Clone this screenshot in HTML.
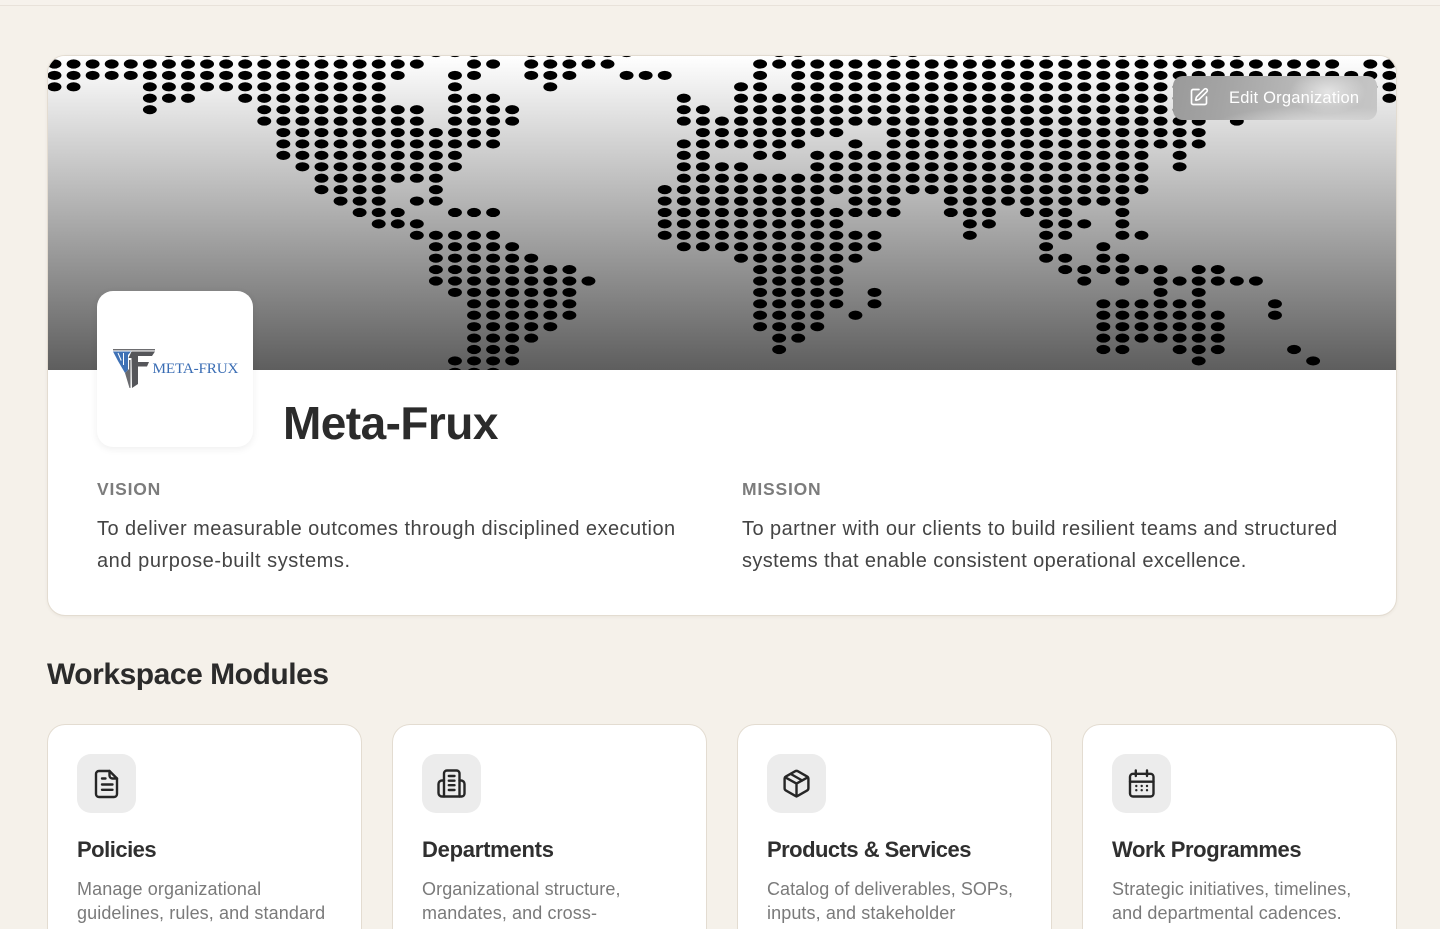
<!DOCTYPE html>
<html lang="en">
<head>
<meta charset="utf-8">
<title>Meta-Frux</title>
<style>
*{box-sizing:border-box;margin:0;padding:0}
html,body{width:1440px;height:929px;overflow:hidden;background:#f5f1ea;font-family:"Liberation Sans",sans-serif;color:#2b2b2b}
#wrap{position:relative;width:1440px;height:929px;overflow:hidden}
.abs{position:absolute;white-space:nowrap}
#top{position:absolute;left:0;top:0;width:1440px;height:6px;background:#f6f2ec;border-bottom:1px solid #e8e2da}
#card{position:absolute;left:47px;top:55px;width:1350px;height:561px;background:#fff;border:1px solid #e3dcd1;border-radius:18px;overflow:hidden;box-shadow:0 1px 3px rgba(60,50,30,.06)}
#banner{position:absolute;left:0;top:0;width:1348px;height:314px;background:linear-gradient(180deg,#fff 0%,#5e5e5e 100%);overflow:hidden}
#banner svg{position:absolute;left:0;top:0}
#btn{position:absolute;left:1125px;top:20px;width:204px;height:44px;border-radius:10px;background:radial-gradient(ellipse 38px 22px at 155px 16px,rgba(232,232,232,.9),rgba(232,232,232,0)),radial-gradient(ellipse 110px 20px at 150px 50px,rgba(224,224,224,.95),rgba(224,224,224,0)),linear-gradient(100deg,#9a9a9a 0%,#a4a4a4 25%,#b8b8b8 60%,#c6c6c6 100%)}
#btn svg{position:absolute;left:16px;top:11px}
#btn span{position:absolute;left:56px;top:12px;font-size:16.5px;line-height:20px;color:#fff;white-space:nowrap;letter-spacing:.22px}
#logo{position:absolute;left:97px;top:291px;width:156px;height:156px;background:#fff;border-radius:16px;box-shadow:0 2px 8px rgba(0,0,0,.07)}
.lab{font-size:17.5px;font-weight:700;color:#7c7c7c;letter-spacing:.8px;line-height:20px}
.txt{font-size:20px;line-height:32px;color:#444}
.c{position:absolute;top:724px;width:315px;height:205px;background:#fff;border:1px solid #e3dcd1;border-bottom:none;border-radius:18px 18px 0 0}
.ib{position:absolute;left:29px;top:29px;width:59px;height:59px;background:#ececec;border-radius:14px}
.ib svg{position:absolute;left:0;top:0;fill:none;stroke:#262626;stroke-width:2.4;stroke-linecap:round;stroke-linejoin:round}
.h{position:absolute;left:29px;top:111px;font-size:22px;font-weight:700;line-height:28px;color:#2f2f2f;white-space:nowrap}
.d{position:absolute;left:29px;top:152px;font-size:18px;line-height:24px;color:#7a7a7a;letter-spacing:.1px;white-space:nowrap}
</style>
</head>
<body>
<div id="wrap">
<div id="top"></div>
<div id="card">
  <div id="banner">
    <svg width="1348" height="314" viewBox="48 56 1348 314">
      <g transform="translate(54.5 64) scale(19.07 12.55)">
        <path fill="none" stroke="#000" stroke-width=".73" stroke-linecap="round" stroke-dasharray="0 1" d="
M6 -.91h16.5M25 -.91h5.5M38 -.91h1.5M44 -.91h1.5M47 -.91h15.5
M0 0h19.5M22 0h1.5M25 0h4.5M37 0h30.5M69 0h1.5
M0 .91h18.5M21 .91h1.5M25 .91h2.5M30 .91h2.5M37 .91h.5M39 .91h31.5
M0 1.82h1.5M5 1.82h12.5M21 1.82h.5M26 1.82h.5M36 1.82h1.5M39 1.82h27.5M69 1.82h1.5
M5 2.73h2.5M10 2.73h7.5M21 2.73h2.5M33 2.73h.5M36 2.73h30.5M70 2.73h.5
M5 3.64h.5M11 3.64h8.5M21 3.64h3.5M33 3.64h1.5M36 3.64h24.5
M11 4.55h8.5M21 4.55h3.5M33 4.55h27.5M62 4.55h.5
M12 5.46h11.5M34 5.46h7.5M44 5.46h16.5
M12 6.37h11.5M33 6.37h6.5M42 6.37h.5M44 6.37h16.5
M12 7.28h9.5M33 7.28h1.5M37 7.28h1.5M40 7.28h17.5M59 7.28h.5
M13 8.19h8.5M33 8.19h3.5M40 8.19h17.5M59 8.19h.5
M14 9.1h6.5M33 9.1h24.5
M14 10.01h3.5M20 10.01h.5M32 10.01h25.5
M15 10.92h2.5M19 10.92h1.5M32 10.92h8.5M42 10.92h2.5M47 10.92h9.5
M16 11.83h2.5M21 11.83h2.5M32 11.83h12.5M47 11.83h2.5M51 11.83h2.5M56 11.83h.5
M17 12.74h2.5M32 12.74h9.5M48 12.74h1.5M52 12.74h2.5M56 12.74h.5
M19 13.65h4.5M32 13.65h11.5M48 13.65h.5M52 13.65h1.5M56 13.65h1.5
M20 14.56h4.5M33 14.56h10.5M52 14.56h.5M55 14.56h.5
M20 15.47h5.5M36 15.47h6.5M52 15.47h1.5M55 15.47h1.5
M20 16.38h7.5M37 16.38h4.5M53 16.38h5.5M60 16.38h1.5
M20 17.29h8.5M37 17.29h4.5M54 17.29h.5M56 17.29h.5M58 17.29h5.5
M21 18.2h6.5M37 18.2h4.5M43 18.2h.5M58 18.2h.5M60 18.2h.5
M22 19.11h5.5M37 19.11h4.5M43 19.11h.5M55 19.11h5.5M64 19.11h.5
M22 20.02h5.5M37 20.02h3.5M42 20.02h.5M55 20.02h6.5M64 20.02h.5
M22 20.93h4.5M37 20.93h3.5M55 20.93h6.5
M22 21.84h3.5M38 21.84h1.5M55 21.84h6.5
M22 22.75h2.5M38 22.75h.5M55 22.75h1.5M59 22.75h2.5M65 22.75h.5
M21 23.66h3.5M60 23.66h.5M66 23.66h.5
M21 24.57h2.5"/>
      </g>
    </svg>
    <div id="btn">
      <svg width="20" height="20" viewBox="0 0 24 24" fill="none" stroke="#fff" stroke-width="2" stroke-linecap="round" stroke-linejoin="round">
        <path d="M12 3H5a2 2 0 0 0-2 2v14a2 2 0 0 0 2 2h14a2 2 0 0 0 2-2v-7"/>
        <path d="M18.375 2.625a1 1 0 0 1 3 3l-9.013 9.014a2 2 0 0 1-.853.505l-2.873.84a.5.5 0 0 1-.62-.62l.84-2.873a2 2 0 0 1 .506-.852z"/>
      </svg>
      <span>Edit Organization</span>
    </div>
  </div>
</div>

<div id="logo">
  <svg width="156" height="156" viewBox="97 291 156 156" style="position:absolute;left:0;top:0">
    <rect x="113" y="349" width="42" height="1.4" fill="#6d6d70"/>
    <polygon points="113,351.500 131,351.500 128,355 128,370 125,373 118,361" fill="#3f71b5"/>
    <path d="M118 353l3.200 7.500M123.500 353v12" stroke="#fff" stroke-width="1" fill="none"/>
    <polygon points="131.500,351.500 155,351.500 152,356 138,356 138,362 149,362 147,366.500 138,366.500 138,384 132,388 131.500,358 128.500,358" fill="#55565a"/>
    <polygon points="125,373 129,369 129,360 130.500,360 130.500,388 129.500,388" fill="#6a6b6f"/>
    <text x="152.5" y="373" font-family="'Liberation Serif',serif" font-size="15.2" fill="#3a6db4" textLength="86">META-FRUX</text>
  </svg>
</div>

<div class="abs" style="left:283px;top:397px;font-size:46px;line-height:52px;font-weight:700;color:#2b2b2b;letter-spacing:-.55px">Meta-Frux</div>

<div class="abs lab" style="left:97px;top:479px">VISION</div>
<div class="abs txt" style="left:97px;top:513px"><span style="letter-spacing:.453px">To deliver measurable outcomes through disciplined execution</span><br><span style="letter-spacing:.56px">and purpose-built systems.</span></div>

<div class="abs lab" style="left:742px;top:479px">MISSION</div>
<div class="abs txt" style="left:742px;top:513px"><span style="letter-spacing:.444px">To partner with our clients to build resilient teams and structured</span><br><span style="letter-spacing:.39px">systems that enable consistent operational excellence.</span></div>

<div class="abs" style="left:47px;top:657px;font-size:30px;line-height:36px;font-weight:700;color:#2b2b2b;letter-spacing:-.47px">Workspace Modules</div>

<div class="c" style="left:47px">
  <div class="ib"><svg width="59" height="59" viewBox="0 0 59 59"><path d="M22 17h10.500l7.500 7.500V40a3 3 0 0 1-3 3H22a3 3 0 0 1-3-3V20a3 3 0 0 1 3-3z"/><path d="M32.500 17v4.500a3 3 0 0 0 3 3H40"/><path d="M25 24.500h3.500M25 30.500h10.500M25 35.800h10.500"/></svg></div>
  <div class="h" style="letter-spacing:-.5px">Policies</div>
  <div class="d">Manage organizational<br>guidelines, rules, and standard</div>
</div>
<div class="c" style="left:392px">
  <div class="ib"><svg width="59" height="59" viewBox="0 0 59 59"><path d="M22 42.500V19.500a3 3 0 0 1 3-3h9.500a3 3 0 0 1 3 3v23"/><path d="M22 26.500h-2a3.500 3.500 0 0 0-3.500 3.500v9a3.500 3.500 0 0 0 3.500 3.500h19.500a3 3 0 0 0 3-3v-9.500a3.500 3.500 0 0 0-3.500-3.500h-1.500"/><path d="M26.800 22h5.700M26.800 26.700h5.700M26.800 31.200h5.700M26.800 36h5.700"/></svg></div>
  <div class="h" style="letter-spacing:-.25px">Departments</div>
  <div class="d">Organizational structure,<br>mandates, and cross-</div>
</div>
<div class="c" style="left:737px">
  <div class="ib"><svg width="59" height="59" viewBox="0 0 59 59"><path d="M28 17.300a3 3 0 0 1 3 0l9 5.100a2.800 2.800 0 0 1 1.400 2.400v9.400a2.800 2.800 0 0 1-1.400 2.400l-9 5.100a3 3 0 0 1-3 0l-9-5.100a2.800 2.800 0 0 1-1.400-2.400v-9.400a2.800 2.800 0 0 1 1.400-2.400z"/><path d="M18.200 23.300l11.300 6.300 11.300-6.300M29.500 29.600v12.900M23.800 20l11.400 6.500"/></svg></div>
  <div class="h" style="letter-spacing:-.53px">Products &amp; Services</div>
  <div class="d"><span style="letter-spacing:.03px">Catalog of deliverables, SOPs,</span><br>inputs, and stakeholder</div>
</div>
<div class="c" style="left:1082px">
  <div class="ib"><svg width="59" height="59" viewBox="0 0 59 59"><rect x="18" y="19.800" width="23.500" height="22.700" rx="3"/><path d="M23.800 16.500v5.500M35 16.500v5.500M18 27.700h23.500"/><g stroke-width="2.400"><path d="M24.300 32h.01M29.700 32h.01M35 32h.01M24.300 36.200h.01M29.700 36.200h.01M35 36.200h.01"/></g></svg></div>
  <div class="h" style="letter-spacing:-.4px">Work Programmes</div>
  <div class="d">Strategic initiatives, timelines,<br>and departmental cadences.</div>
</div>
</div>
</body>
</html>
